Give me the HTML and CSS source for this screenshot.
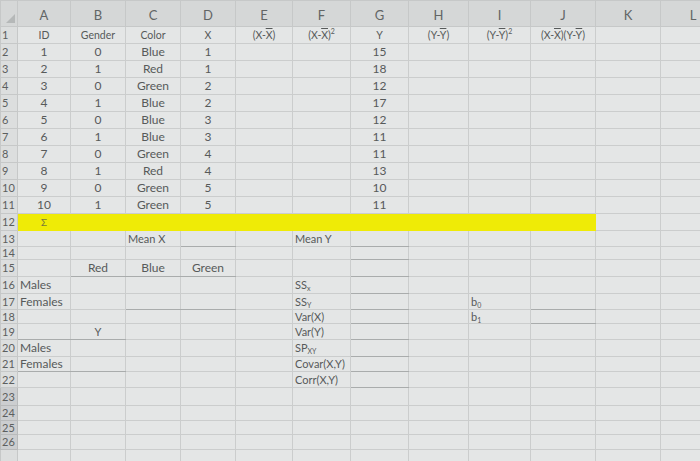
FILE: index.html
```html
<!DOCTYPE html>
<html>
<head>
<meta charset="utf-8">
<link rel="stylesheet" href="styles.css">
</head>
<body>
<table class="sheet">
<colgroup>
<col class="c-rh"><col class="c-a"><col class="c-b"><col class="c-c"><col class="c-d"><col class="c-e"><col class="c-f"><col class="c-g"><col class="c-h"><col class="c-i"><col class="c-j"><col class="c-k"><col class="c-l">
</colgroup>
<tr class="ch"><td class="corner"><span class="tri"></span></td><td>A</td><td>B</td><td>C</td><td>D</td><td>E</td><td>F</td><td>G</td><td>H</td><td>I</td><td>J</td><td>K</td><td>L</td></tr>
<tr class="r1 hdr"><td class="rh">1</td><td>ID</td><td>Gender</td><td>Color</td><td>X</td><td>(X-<span class="ov">X</span>)</td><td>(X-<span class="ov">X</span>)<sup>2</sup></td><td>Y</td><td>(Y-<span class="ov">Y</span>)</td><td>(Y-<span class="ov">Y</span>)<sup>2</sup></td><td>(X-<span class="ov">X</span>)(Y-<span class="ov">Y</span>)</td><td></td><td></td></tr>
<tr class="r1 dat"><td class="rh">2</td><td>1</td><td>0</td><td>Blue</td><td>1</td><td></td><td></td><td>15</td><td></td><td></td><td></td><td></td><td></td></tr>
<tr class="r1 dat"><td class="rh">3</td><td>2</td><td>1</td><td>Red</td><td>1</td><td></td><td></td><td>18</td><td></td><td></td><td></td><td></td><td></td></tr>
<tr class="r1 dat"><td class="rh">4</td><td>3</td><td>0</td><td>Green</td><td>2</td><td></td><td></td><td>12</td><td></td><td></td><td></td><td></td><td></td></tr>
<tr class="r1 dat"><td class="rh">5</td><td>4</td><td>1</td><td>Blue</td><td>2</td><td></td><td></td><td>17</td><td></td><td></td><td></td><td></td><td></td></tr>
<tr class="r1 dat"><td class="rh">6</td><td>5</td><td>0</td><td>Blue</td><td>3</td><td></td><td></td><td>12</td><td></td><td></td><td></td><td></td><td></td></tr>
<tr class="r1 dat"><td class="rh">7</td><td>6</td><td>1</td><td>Blue</td><td>3</td><td></td><td></td><td>11</td><td></td><td></td><td></td><td></td><td></td></tr>
<tr class="r1 dat"><td class="rh">8</td><td>7</td><td>0</td><td>Green</td><td>4</td><td></td><td></td><td>11</td><td></td><td></td><td></td><td></td><td></td></tr>
<tr class="r1 dat"><td class="rh">9</td><td>8</td><td>1</td><td>Red</td><td>4</td><td></td><td></td><td>13</td><td></td><td></td><td></td><td></td><td></td></tr>
<tr class="r1 dat"><td class="rh">10</td><td>9</td><td>0</td><td>Green</td><td>5</td><td></td><td></td><td>10</td><td></td><td></td><td></td><td></td><td></td></tr>
<tr class="r1 dat"><td class="rh">11</td><td>10</td><td>1</td><td>Green</td><td>5</td><td></td><td></td><td>11</td><td></td><td></td><td></td><td></td><td></td></tr>
<tr class="r12"><td class="rh">12</td><td class="y sig">Σ</td><td class="y"></td><td class="y"></td><td class="y"></td><td class="y"></td><td class="y"></td><td class="y"></td><td class="y"></td><td class="y"></td><td class="y"></td><td></td><td></td></tr>
<tr class="r13 lo"><td class="rh">13</td><td></td><td></td><td class="lbl sm">Mean X</td><td class="bb"></td><td></td><td class="lbl sm">Mean Y</td><td class="bb"></td><td></td><td></td><td></td><td></td><td></td></tr>
<tr class="r14 lo"><td class="rh">14</td><td></td><td></td><td></td><td></td><td></td><td></td><td class="bb"></td><td></td><td></td><td></td><td></td><td></td></tr>
<tr class="r15 lo"><td class="rh">15</td><td></td><td class="ctr bb">Red</td><td class="ctr bb">Blue</td><td class="ctr bb">Green</td><td></td><td></td><td class="bb"></td><td></td><td></td><td></td><td></td><td></td></tr>
<tr class="r16 lo"><td class="rh">16</td><td class="lbl edge">Males</td><td></td><td></td><td></td><td></td><td class="lbl sm">SS<sub>x</sub></td><td class="bb"></td><td></td><td></td><td></td><td></td><td></td></tr>
<tr class="r17 lo"><td class="rh">17</td><td class="lbl edge">Females</td><td></td><td class="bb"></td><td class="bb"></td><td></td><td class="lbl sm">SS<sub>Y</sub></td><td class="bb"></td><td></td><td class="lbl sm">b<sub>0</sub></td><td class="bb"></td><td></td><td></td></tr>
<tr class="r18 lo"><td class="rh">18</td><td></td><td></td><td></td><td></td><td></td><td class="lbl sm">Var(X)</td><td class="bb"></td><td></td><td class="lbl sm">b<sub>1</sub></td><td class="bb"></td><td></td><td></td></tr>
<tr class="r19 lo"><td class="rh">19</td><td class="bb"></td><td class="ctr sm bb">Y</td><td></td><td></td><td></td><td class="lbl sm">Var(Y)</td><td class="bb"></td><td></td><td></td><td></td><td></td><td></td></tr>
<tr class="r20 lo"><td class="rh">20</td><td class="lbl edge">Males</td><td></td><td></td><td></td><td></td><td class="lbl sm">SP<sub>XY</sub></td><td class="bb"></td><td></td><td></td><td></td><td></td><td></td></tr>
<tr class="r21 lo"><td class="rh">21</td><td class="lbl edge bb">Females</td><td class="bb"></td><td></td><td></td><td></td><td class="lbl sm">Covar(X,Y)</td><td class="bb"></td><td></td><td></td><td></td><td></td><td></td></tr>
<tr class="r22 lo"><td class="rh">22</td><td></td><td></td><td></td><td></td><td></td><td class="lbl sm">Corr(X,Y)</td><td class="bb"></td><td></td><td></td><td></td><td></td><td></td></tr>
<tr class="r23 lo"><td class="rh sel">23</td><td></td><td></td><td></td><td></td><td></td><td></td><td></td><td></td><td></td><td></td><td></td><td></td></tr>
<tr class="r24 lo"><td class="rh sel">24</td><td></td><td></td><td></td><td></td><td></td><td></td><td></td><td></td><td></td><td></td><td></td><td></td></tr>
<tr class="r25 lo"><td class="rh sel">25</td><td></td><td></td><td></td><td></td><td></td><td></td><td></td><td></td><td></td><td></td><td></td><td></td></tr>
<tr class="r26 lo"><td class="rh sel">26</td><td></td><td></td><td></td><td></td><td></td><td></td><td></td><td></td><td></td><td></td><td></td><td></td></tr>
<tr class="r27 lo"><td class="rh"></td><td></td><td></td><td></td><td></td><td></td><td></td><td></td><td></td><td></td><td></td><td></td><td></td></tr>
</table>
</body>
</html>
```
FILE: styles.css
```css
html, body {
  margin: 0;
  padding: 0;
  width: 700px;
  height: 461px;
  overflow: hidden;
  background: #dfe1e1;
}
.sheet {
  border-collapse: collapse;
  table-layout: fixed;
  width: 725px;
  font-family: "Lato", "Liberation Sans", sans-serif;
  color: #575a5a;
}
.c-rh { width: 17px; }
.c-a { width: 53px; }
.c-b, .c-c, .c-d { width: 55px; }
.c-e { width: 57px; }
.c-f, .c-g { width: 58px; }
.c-h { width: 60px; }
.c-i { width: 62px; }
.c-j, .c-k, .c-l { width: 65px; }

.sheet td {
  border: 1px solid #cbcdcd;
  padding: 0 2px;
  overflow: hidden;
  white-space: nowrap;
  text-align: center;
  background: #e4e6e6;
  font-size: 12px;
  line-height: 12px;
}
.ch td {
  height: 23px;
  background: #d5d7d7;
  color: #626565;
  font-size: 13px;
  border-color: #c6c8c8;
  padding-top: 2px;
  vertical-align: middle;
}
.ch td.corner {
  position: relative;
  background: #d5d7d7;
}
.tri {
  position: absolute;
  right: 2px;
  bottom: 3px;
  width: 0;
  height: 0;
  border-left: 9px solid transparent;
  border-bottom: 9px solid #b5b8b8;
}
.sheet td.rh {
  text-align: left;
  padding: 0 0 0 1px;
  background: #dcdede;
  color: #5c5f5f;
  font-size: 11px;
  border-color: #c6c8c8;
}
.sheet td.rh.sel {
  background: #ccced0;
  border-color: #b8babb;
}
.r1 td { height: 16px; }
.hdr td { font-size: 10.5px; }
.hdr sup { font-size: 7px; line-height: 0; vertical-align: 5px; }
.ov { text-decoration: overline; }
.r12 td { height: 16px; }
.sheet td.y {
  background: #efeb06;
  border-color: #efeb06;
}
.sheet td.sig {
  font-size: 10px;
  color: #7a7a3a;
}
.r13 td { height: 15px; }
.r14 td { height: 11px; }
.r15 td { height: 16px; }
.r16 td { height: 16px; }
.r17 td { height: 15px; }
.r18 td { height: 13px; }
.r19 td { height: 15px; }
.r20 td { height: 16px; }
.r21 td { height: 14px; }
.r22 td { height: 15px; }
.r23 td { height: 17px; }
.r24 td { height: 14px; }
.r25 td { height: 13px; }
.r26 td { height: 14px; }
.r27 td { height: 20px; }
.sheet td.lbl { text-align: left; }
.sheet td.sm { font-size: 11px; }
.sheet td.edge { padding-left: 2px; }
.sheet td.bb { border-bottom: 1px solid #a9acac; }
.lo sub { font-size: 7px; line-height: 0; vertical-align: -2px; }
```
